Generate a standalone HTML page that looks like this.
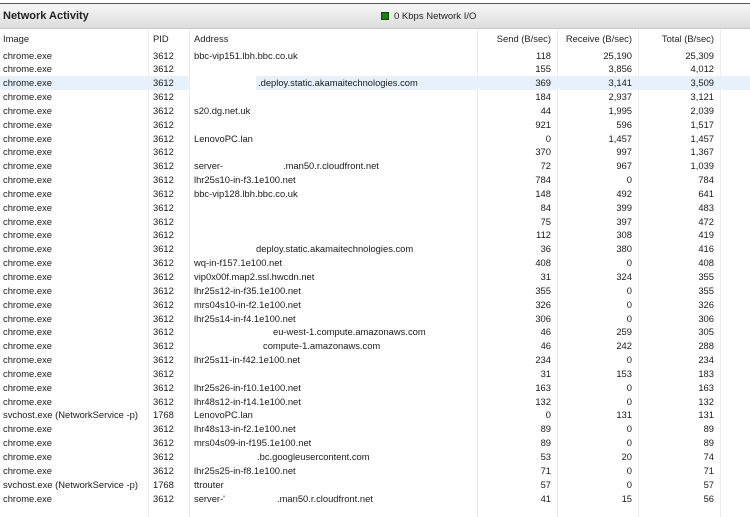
<!DOCTYPE html>
<html><head><meta charset="utf-8"><style>
body{margin:0;width:750px;height:517px;background:#fff;overflow:hidden;font-family:"Liberation Sans",sans-serif;font-size:9.4px;color:#1a1a1a;position:relative}
.top{position:absolute;left:0;top:3px;width:750px;height:1px;background:#555}
.bar{position:absolute;left:0;top:4px;width:750px;height:24px;background:linear-gradient(#f7f7f7,#dcdcdc);border-bottom:1px solid #c8c8c8}
.title{position:absolute;left:3px;top:6px;font-size:11px;font-weight:bold;color:#222}
.sq{position:absolute;left:381px;top:8px;width:8px;height:8px;background:#1d7a1d;border:1px solid #0b4a0b;box-sizing:border-box}
.io{position:absolute;left:394px;top:7px;font-size:9.5px;color:#222}
.vl{position:absolute;top:29px;height:488px;width:1px;background:#ececec}
.hd{position:absolute;top:33px;color:#222}
#rows{position:absolute;left:0;top:48.5px;width:750px}
.r{position:relative;height:13.85px;line-height:13px}
.r.h{background:#e6f1fb}
.r span{position:absolute;top:0;white-space:nowrap}
.a{left:3px}.p{left:153px}.d{left:194px}
.s{right:199px}.v{right:118px}.t{right:36px}
.hl{position:absolute;left:190px;top:0;width:66px;height:13.85px;background:#fff}
</style></head><body>
<div class="top"></div>
<div class="bar"><div class="title">Network Activity</div><div class="sq"></div><div class="io">0 Kbps Network I/O</div></div>
<div class="vl" style="left:148px"></div><div class="vl" style="left:189px"></div><div class="vl" style="left:477px"></div><div class="vl" style="left:557px"></div><div class="vl" style="left:638px"></div><div class="vl" style="left:720px"></div>
<span class="hd" style="left:3px">Image</span><span class="hd" style="left:153px">PID</span><span class="hd" style="left:194px">Address</span>
<span class="hd" style="right:199px">Send (B/sec)</span><span class="hd" style="right:118px">Receive (B/sec)</span><span class="hd" style="right:36px">Total (B/sec)</span>
<div id="rows">
<div class="r"><span class="a">chrome.exe</span><span class="p">3612</span><span class="d">bbc-vip151.lbh.bbc.co.uk</span><span class="s">118</span><span class="v">25,190</span><span class="t">25,309</span></div>
<div class="r"><span class="a">chrome.exe</span><span class="p">3612</span><span class="s">155</span><span class="v">3,856</span><span class="t">4,012</span></div>
<div class="r h"><div class="hl"></div><span class="a">chrome.exe</span><span class="p">3612</span><span class="d" style="left:258px">.deploy.static.akamaitechnologies.com</span><span class="s">369</span><span class="v">3,141</span><span class="t">3,509</span></div>
<div class="r"><span class="a">chrome.exe</span><span class="p">3612</span><span class="s">184</span><span class="v">2,937</span><span class="t">3,121</span></div>
<div class="r"><span class="a">chrome.exe</span><span class="p">3612</span><span class="d">s20.dg.net.uk</span><span class="s">44</span><span class="v">1,995</span><span class="t">2,039</span></div>
<div class="r"><span class="a">chrome.exe</span><span class="p">3612</span><span class="s">921</span><span class="v">596</span><span class="t">1,517</span></div>
<div class="r"><span class="a">chrome.exe</span><span class="p">3612</span><span class="d">LenovoPC.lan</span><span class="s">0</span><span class="v">1,457</span><span class="t">1,457</span></div>
<div class="r"><span class="a">chrome.exe</span><span class="p">3612</span><span class="s">370</span><span class="v">997</span><span class="t">1,367</span></div>
<div class="r"><span class="a">chrome.exe</span><span class="p">3612</span><span class="d">server-</span><span class="d" style="left:283px">.man50.r.cloudfront.net</span><span class="s">72</span><span class="v">967</span><span class="t">1,039</span></div>
<div class="r"><span class="a">chrome.exe</span><span class="p">3612</span><span class="d">lhr25s10-in-f3.1e100.net</span><span class="s">784</span><span class="v">0</span><span class="t">784</span></div>
<div class="r"><span class="a">chrome.exe</span><span class="p">3612</span><span class="d">bbc-vip128.lbh.bbc.co.uk</span><span class="s">148</span><span class="v">492</span><span class="t">641</span></div>
<div class="r"><span class="a">chrome.exe</span><span class="p">3612</span><span class="s">84</span><span class="v">399</span><span class="t">483</span></div>
<div class="r"><span class="a">chrome.exe</span><span class="p">3612</span><span class="s">75</span><span class="v">397</span><span class="t">472</span></div>
<div class="r"><span class="a">chrome.exe</span><span class="p">3612</span><span class="s">112</span><span class="v">308</span><span class="t">419</span></div>
<div class="r"><span class="a">chrome.exe</span><span class="p">3612</span><span class="d" style="left:256px">deploy.static.akamaitechnologies.com</span><span class="s">36</span><span class="v">380</span><span class="t">416</span></div>
<div class="r"><span class="a">chrome.exe</span><span class="p">3612</span><span class="d">wq-in-f157.1e100.net</span><span class="s">408</span><span class="v">0</span><span class="t">408</span></div>
<div class="r"><span class="a">chrome.exe</span><span class="p">3612</span><span class="d">vip0x00f.map2.ssl.hwcdn.net</span><span class="s">31</span><span class="v">324</span><span class="t">355</span></div>
<div class="r"><span class="a">chrome.exe</span><span class="p">3612</span><span class="d">lhr25s12-in-f35.1e100.net</span><span class="s">355</span><span class="v">0</span><span class="t">355</span></div>
<div class="r"><span class="a">chrome.exe</span><span class="p">3612</span><span class="d">mrs04s10-in-f2.1e100.net</span><span class="s">326</span><span class="v">0</span><span class="t">326</span></div>
<div class="r"><span class="a">chrome.exe</span><span class="p">3612</span><span class="d">lhr25s14-in-f4.1e100.net</span><span class="s">306</span><span class="v">0</span><span class="t">306</span></div>
<div class="r"><span class="a">chrome.exe</span><span class="p">3612</span><span class="d" style="left:273px">eu-west-1.compute.amazonaws.com</span><span class="s">46</span><span class="v">259</span><span class="t">305</span></div>
<div class="r"><span class="a">chrome.exe</span><span class="p">3612</span><span class="d" style="left:263px">compute-1.amazonaws.com</span><span class="s">46</span><span class="v">242</span><span class="t">288</span></div>
<div class="r"><span class="a">chrome.exe</span><span class="p">3612</span><span class="d">lhr25s11-in-f42.1e100.net</span><span class="s">234</span><span class="v">0</span><span class="t">234</span></div>
<div class="r"><span class="a">chrome.exe</span><span class="p">3612</span><span class="s">31</span><span class="v">153</span><span class="t">183</span></div>
<div class="r"><span class="a">chrome.exe</span><span class="p">3612</span><span class="d">lhr25s26-in-f10.1e100.net</span><span class="s">163</span><span class="v">0</span><span class="t">163</span></div>
<div class="r"><span class="a">chrome.exe</span><span class="p">3612</span><span class="d">lhr48s12-in-f14.1e100.net</span><span class="s">132</span><span class="v">0</span><span class="t">132</span></div>
<div class="r"><span class="a">svchost.exe (NetworkService -p)</span><span class="p">1768</span><span class="d">LenovoPC.lan</span><span class="s">0</span><span class="v">131</span><span class="t">131</span></div>
<div class="r"><span class="a">chrome.exe</span><span class="p">3612</span><span class="d">lhr48s13-in-f2.1e100.net</span><span class="s">89</span><span class="v">0</span><span class="t">89</span></div>
<div class="r"><span class="a">chrome.exe</span><span class="p">3612</span><span class="d">mrs04s09-in-f195.1e100.net</span><span class="s">89</span><span class="v">0</span><span class="t">89</span></div>
<div class="r"><span class="a">chrome.exe</span><span class="p">3612</span><span class="d" style="left:257px">.bc.googleusercontent.com</span><span class="s">53</span><span class="v">20</span><span class="t">74</span></div>
<div class="r"><span class="a">chrome.exe</span><span class="p">3612</span><span class="d">lhr25s25-in-f8.1e100.net</span><span class="s">71</span><span class="v">0</span><span class="t">71</span></div>
<div class="r"><span class="a">svchost.exe (NetworkService -p)</span><span class="p">1768</span><span class="d">ttrouter</span><span class="s">57</span><span class="v">0</span><span class="t">57</span></div>
<div class="r"><span class="a">chrome.exe</span><span class="p">3612</span><span class="d">server-'</span><span class="d" style="left:277px">.man50.r.cloudfront.net</span><span class="s">41</span><span class="v">15</span><span class="t">56</span></div>
</div>
</body></html>
